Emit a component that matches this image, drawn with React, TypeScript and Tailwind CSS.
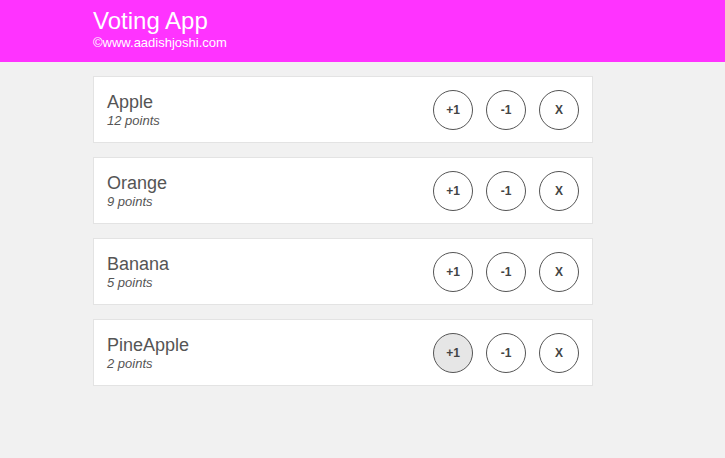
const items = [
  { name: "Apple", points: 12 },
  { name: "Orange", points: 9 },
  { name: "Banana", points: 5 },
  { name: "PineApple", points: 2 },
]

function RoundButton({ label, active }: { label: string; active?: boolean }) {
  return (
    <button
      type="button"
      className={`flex h-10 w-10 items-center justify-center rounded-full border border-[#555] text-[12px] font-bold text-[#444] ${
        active ? "bg-[#e6e6e6]" : "bg-white"
      }`}
    >
      {label}
    </button>
  )
}

export default function App() {
  return (
    <div className="min-h-[458px] bg-[#f1f1f1] font-['Liberation_Sans',Arial,sans-serif]">
      <header className="h-[62px] bg-[#ff33ff] pl-[93px] pt-[7px] text-white">
        <h1 className="text-[24px] leading-[28px]">Voting App</h1>
        <p className="text-[13px] leading-[15px]">©www.aadishjoshi.com</p>
      </header>
      <main className="ml-[93px] mt-[14px] flex w-[500px] flex-col gap-[14px]">
        {items.map((item, i) => (
          <div
            key={item.name}
            className="flex h-[67px] items-center justify-between border border-[#e3e3e3] bg-white pl-[13px] pr-[13px]"
          >
            <div className="text-[#555]">
              <div className="text-[18px] leading-[20px]">{item.name}</div>
              <div className="mt-[1px] text-[13px] italic leading-[15px]">{item.points} points</div>
            </div>
            <div className="flex gap-[13px]">
              <RoundButton label="+1" active={i === 3} />
              <RoundButton label="-1" />
              <RoundButton label="X" />
            </div>
          </div>
        ))}
      </main>
    </div>
  )
}
